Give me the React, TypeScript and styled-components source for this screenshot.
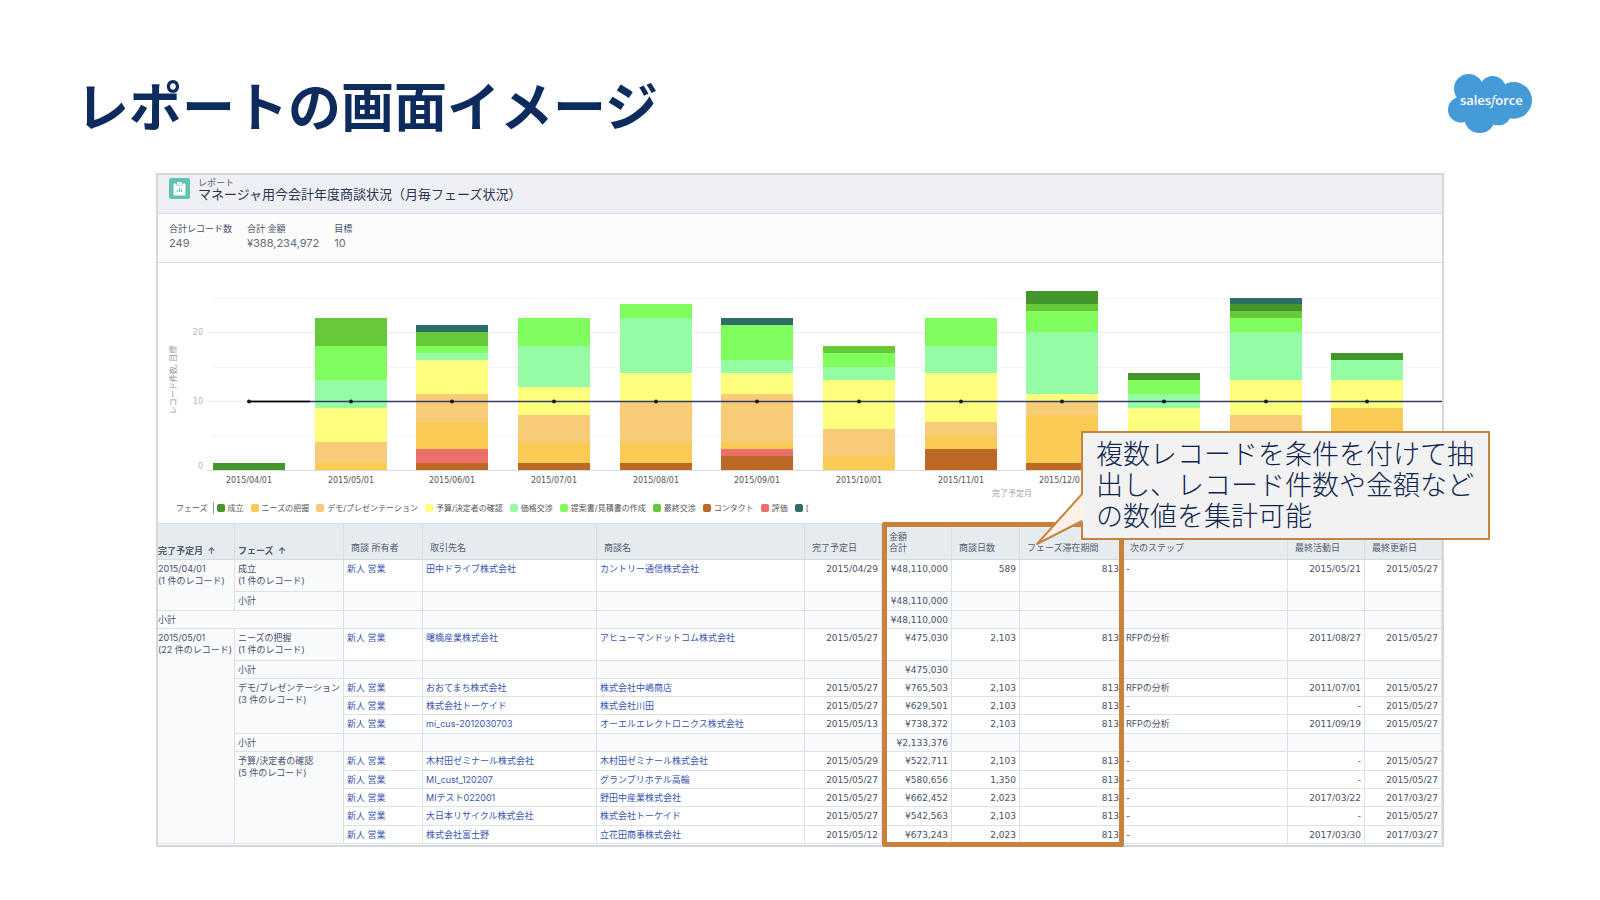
import React from "react";
import styled, { createGlobalStyle } from "styled-components";

const GlobalStyle = createGlobalStyle`
  body {
    margin: 0;
    background: #fff;
    font-family: Inter, "Noto Sans CJK JP", sans-serif;
    color: #4a5068;
  }
  * { box-sizing: border-box; }
`;

const Slide = styled.main`
  padding: 64px 0 52px;
`;

const SlideHeader = styled.header`
  display: flex;
  justify-content: space-between;
  align-items: flex-start;
  padding: 0 68px 0 76px;
  height: 109px;
`;

const SlideTitle = styled.h1`
  margin: 0;
  font-family: "Noto Sans CJK JP", sans-serif;
  font-size: 53px;
  line-height: 80px;
  font-weight: 700;
  color: #0d2b5c;
`;

const Logo = styled.svg`
  display: block;
  width: 84px;
  height: 59px;
  margin-top: 10px;
`;

const Report = styled.section`
  position: relative;
  margin: 0 156px;
  border: 2px solid #d5d7dc;
  background: #fff;
`;

const ReportHeader = styled.header`
  display: flex;
  gap: 8px;
  height: 39px;
  padding: 3px 11px;
  background: #eff0f6;
  border-bottom: 1px solid #d9dce8;
`;

const ReportIcon = styled.svg`
  width: 21px;
  height: 21px;
`;

const ReportKind = styled.p`
  margin: 0;
  font-size: 9px;
  line-height: 9px;
  color: #5b6178;
`;

const ReportTitle = styled.h2`
  margin: 0;
  font-size: 13px;
  line-height: 15px;
  font-weight: 400;
  color: #2b3350;
`;

const Summary = styled.dl`
  display: flex;
  gap: 15px;
  height: 49px;
  margin: 0;
  padding: 8px 11px;
  background: #fcfcfd;
  border-bottom: 1px solid #e2e4e9;
`;

const SummaryLabel = styled.dt`
  font-size: 9px;
  line-height: 14px;
`;

const SummaryValue = styled.dd`
  margin: 0;
  font-size: 11px;
  line-height: 14px;
  color: #666c7e;
`;

const ChartSvg = styled.svg`
  display: block;
  width: 100%;
  height: auto;
`;

const TickLabel = styled.text`
  font-family: "DejaVu Sans", sans-serif;
  font-size: 8px;
`;

const Legend = styled.ul`
  display: flex;
  align-items: center;
  gap: 7px;
  margin: 0;
  padding: 0 0 9px 18px;
  list-style: none;
  font-size: 8px;
  line-height: 12px;
  color: #555;
`;

const LegendTitle = styled.li`
  padding-right: 5px;
  border-right: 1px solid #999;
  margin-right: -4px;
`;

const LegendItem = styled.li`
  display: flex;
  align-items: center;
  gap: 3px;
`;

const Swatch = styled.span<{ $color: string }>`
  width: 8px;
  height: 8px;
  border-radius: 2px;
  background: ${(p) => p.$color};
`;

const TableArea = styled.div`
  position: relative;
  border-top: 1px solid #d3d9e2;
  padding-bottom: 1px;
`;

const Table = styled.table`
  width: 100%;
  table-layout: fixed;
  border-collapse: separate;
  border-spacing: 0;
  font-size: 9px;
  line-height: 12px;
`;

const HeadCell = styled.th<{ $group?: boolean; $first?: boolean }>`
  height: 36px;
  padding: 0 0 ${(p) => (p.$group ? 3 : 6)}px ${(p) => (p.$first ? 0 : p.$group ? 3 : 7)}px;
  border-right: 1px solid #d9dfe5;
  border-bottom: 1px solid #d3d9df;
  background: #e6ebef;
  text-align: left;
  vertical-align: bottom;
  line-height: 11px;
  font-weight: ${(p) => (p.$group ? 600 : 400)};
  white-space: nowrap;
  color: #555c70;
`;

const Row = styled.tr<{ $height: number; $shade?: boolean }>`
  height: ${(p) => p.$height}px;
  background: ${(p) => (p.$shade ? "#f9fafc" : "#fff")};
`;

const Cell = styled.td<{ $first?: boolean; $shade?: boolean }>`
  padding: 3px 0 0 ${(p) => (p.$first ? 0 : 3)}px;
  border-right: 1px solid #dde1e8;
  border-bottom: 1px solid #dde1e8;
  background: ${(p) => (p.$shade ? "#f9fafc" : "transparent")};
  vertical-align: top;
  white-space: nowrap;
`;

const NumberCell = styled(Cell)`
  padding: 3px 3px 0 0;
  font-family: "DejaVu Sans", sans-serif;
  text-align: right;
`;

const RecordLink = styled.a`
  color: #3a55b0;
  text-decoration: none;
`;

const Highlight = styled.div`
  position: absolute;
  top: -2px;
  bottom: -2px;
  left: calc(100% * 724 / 1284);
  width: calc(100% * 242 / 1284);
  border: 5px solid #c8823c;
  border-radius: 2px;
  pointer-events: none;
`;

const Callout = styled.aside`
  position: absolute;
  top: 256px;
  right: -48px;
  width: 409px;
  height: 109px;
  padding: 4px 10px 0 13px;
  border: 2px solid #c8843f;
  background: #f2f2f2;
  font-family: "Noto Sans CJK JP", sans-serif;
  font-size: 27px;
  line-height: 31px;
  font-weight: 300;
  color: #0f2550;
`;

const CalloutTail = styled.svg`
  position: absolute;
  left: -48px;
  top: 58px;
  width: 49px;
  height: 56px;
`;

const C = {
  won: "#43962a",
  needs: "#f9cb55",
  demo: "#f7cb78",
  budget: "#fefe7e",
  price: "#94fca4",
  proposal: "#80fd5c",
  final: "#67c93a",
  contact: "#bd6825",
  review: "#eb706a",
  other: "#2d6f66",
};
type Phase = keyof typeof C;

const bars: { label?: string; stack: [Phase, number][] }[] = [
  { label: "2015/04/01", stack: [["won", 1]] },
  { label: "2015/05/01", stack: [["needs", 1], ["demo", 3], ["budget", 5], ["price", 4], ["proposal", 5], ["final", 4]] },
  { label: "2015/06/01", stack: [["contact", 1], ["review", 2], ["needs", 4], ["demo", 4], ["budget", 5], ["price", 1], ["proposal", 1], ["final", 2], ["other", 1]] },
  { label: "2015/07/01", stack: [["contact", 1], ["needs", 3], ["demo", 4], ["budget", 4], ["price", 6], ["proposal", 4]] },
  { label: "2015/08/01", stack: [["contact", 1], ["needs", 3], ["demo", 6], ["budget", 4], ["price", 8], ["proposal", 2]] },
  { label: "2015/09/01", stack: [["contact", 2], ["review", 1], ["needs", 1], ["demo", 7], ["budget", 3], ["price", 2], ["proposal", 5], ["other", 1]] },
  { label: "2015/10/01", stack: [["needs", 2], ["demo", 4], ["budget", 7], ["price", 2], ["proposal", 2], ["final", 1]] },
  { label: "2015/11/01", stack: [["contact", 3], ["needs", 2], ["demo", 2], ["budget", 7], ["price", 4], ["proposal", 4]] },
  { label: "2015/12/01", stack: [["contact", 1], ["needs", 7], ["demo", 2], ["budget", 1], ["price", 9], ["proposal", 3], ["final", 1], ["won", 2]] },
  { stack: [["needs", 2], ["demo", 2], ["budget", 5], ["price", 2], ["proposal", 2], ["won", 1]] },
  { stack: [["needs", 4], ["demo", 4], ["budget", 5], ["price", 7], ["proposal", 2], ["final", 1], ["won", 1], ["other", 1]] },
  { stack: [["needs", 9], ["budget", 4], ["price", 3], ["won", 1]] },
];

const BASE = 207;
const yOf = (n: number) => Math.round(BASE - n * 6.9);
const centre = (i: number) => Math.round(91 + (i * 305) / 3);

function Chart() {
  return (
    <ChartSvg viewBox="0 0 1284 239" role="img" aria-label="レコード件数, 目標">
      {[0, 5, 10, 15, 20, 25].map((n) => (
        <rect key={n} x={n % 10 ? 55 : 49} y={yOf(n)} width="1235" height="1" fill={n === 0 ? "#dcdcdc" : n % 10 ? "#f4f4f4" : "#ebebeb"} />
      ))}
      {[0, 10, 20].map((n) => (
        <TickLabel key={n} x="45" y={n === 0 ? BASE - 1 : yOf(n) + 3} textAnchor="end" fill="#b8b8b8">{n}</TickLabel>
      ))}
      <text transform="translate(18 117) rotate(-90)" fontSize="8" textAnchor="middle" fill="#999">レコード件数, 目標</text>
      {bars.map((bar, i) => {
        let sum = 0;
        return (
          <g key={i}>
            {bar.stack.map(([phase, n]) => {
              const bottom = yOf(sum);
              sum += n;
              return <rect key={phase} x={centre(i) - 36} y={yOf(sum)} width="72" height={bottom - yOf(sum)} fill={C[phase]} />;
            })}
            {bar.label && <TickLabel x={centre(i)} y="220" textAnchor="middle" fill="#555">{bar.label}</TickLabel>}
          </g>
        );
      })}
      <path d="M91 138.500H1284" stroke="#343a62" strokeWidth="1.300" />
      <path d="M91 138.500H152" stroke="#000" strokeWidth="1.300" />
      {bars.map((_, i) => (
        <circle key={i} cx={centre(i)} cy="138.500" r="2" fill="#151a22" />
      ))}
      <text x="854" y="233" fontSize="8" textAnchor="middle" fill="#a2a2a2">完了予定月</text>
    </ChartSvg>
  );
}

const legend: [string, Phase][] = [
  ["成立", "won"],
  ["ニーズの把握", "needs"],
  ["デモ/プレゼンテーション", "demo"],
  ["予算/決定者の確認", "budget"],
  ["価格交渉", "price"],
  ["提案書/見積書の作成", "proposal"],
  ["最終交渉", "final"],
  ["コンタクト", "contact"],
  ["評価", "review"],
  ["[", "other"],
];

const columns = [77, 109, 79, 174, 208, 77, 70, 68, 103, 165, 77, 77];

type Group = { lines: string[]; span: number };
type RowData = {
  height: number;
  month?: Group;
  phase?: Group;
  subtotal?: "phase" | "month";
  record?: string[];
  amount: string;
};

const rows: RowData[] = [
  { height: 32, month: { lines: ["2015/04/01", "(1 件のレコード)"], span: 2 }, phase: { lines: ["成立", "(1 件のレコード)"], span: 1 }, amount: "¥48,110,000", record: ["田中ドライブ株式会社", "カントリー通信株式会社", "2015/04/29", "589", "-", "2015/05/21", "2015/05/27"] },
  { height: 19, subtotal: "phase", amount: "¥48,110,000" },
  { height: 18, subtotal: "month", amount: "¥48,110,000" },
  { height: 32, month: { lines: ["2015/05/01", "(22 件のレコード)"], span: 11 }, phase: { lines: ["ニーズの把握", "(1 件のレコード)"], span: 1 }, amount: "¥475,030", record: ["曙橋産業株式会社", "アヒューマンドットコム株式会社", "2015/05/27", "2,103", "RFPの分析", "2011/08/27", "2015/05/27"] },
  { height: 18, subtotal: "phase", amount: "¥475,030" },
  { height: 18, phase: { lines: ["デモ/プレゼンテーション", "(3 件のレコード)"], span: 3 }, amount: "¥765,503", record: ["おおてまち株式会社", "株式会社中嶋商店", "2015/05/27", "2,103", "RFPの分析", "2011/07/01", "2015/05/27"] },
  { height: 18, amount: "¥629,501", record: ["株式会社トーケイド", "株式会社川田", "2015/05/27", "2,103", "-", "-", "2015/05/27"] },
  { height: 19, amount: "¥738,372", record: ["mi_cus-2012030703", "オーエルエレクトロニクス株式会社", "2015/05/13", "2,103", "RFPの分析", "2011/09/19", "2015/05/27"] },
  { height: 18, subtotal: "phase", amount: "¥2,133,376" },
  { height: 19, phase: { lines: ["予算/決定者の確認", "(5 件のレコード)"], span: 5 }, amount: "¥522,711", record: ["木村田ゼミナール株式会社", "木村田ゼミナール株式会社", "2015/05/29", "2,103", "-", "-", "2015/05/27"] },
  { height: 18, amount: "¥580,656", record: ["MI_cust_120207", "グランプリホテル高輪", "2015/05/27", "1,350", "-", "-", "2015/05/27"] },
  { height: 18, amount: "¥662,452", record: ["MIテスト022001", "野田中産業株式会社", "2015/05/27", "2,023", "-", "2017/03/22", "2017/03/27"] },
  { height: 19, amount: "¥542,563", record: ["大日本リサイクル株式会社", "株式会社トーケイド", "2015/05/27", "2,103", "-", "-", "2015/05/27"] },
  { height: 18, amount: "¥673,243", record: ["株式会社富士野", "立花田商事株式会社", "2015/05/12", "2,023", "-", "2017/03/30", "2017/03/27"] },
];

function GroupCell({ group, first }: { group: Group; first?: boolean }) {
  return (
    <Cell rowSpan={group.span} $first={first} $shade>
      {group.lines[0]}
      <br />
      {group.lines[1]}
    </Cell>
  );
}

function ReportRow({ row }: { row: RowData }) {
  const r = row.record;
  return (
    <Row $height={row.height} $shade={!r}>
      {row.month && <GroupCell group={row.month} first />}
      {row.phase && <GroupCell group={row.phase} />}
      {row.subtotal === "phase" && <Cell>小計</Cell>}
      {row.subtotal === "month" && <Cell colSpan={2} $first>小計</Cell>}
      <Cell>{r && <RecordLink href="#owner">新人 営業</RecordLink>}</Cell>
      <Cell>{r && <RecordLink href="#account">{r[0]}</RecordLink>}</Cell>
      <Cell>{r && <RecordLink href="#opportunity">{r[1]}</RecordLink>}</Cell>
      <NumberCell>{r?.[2]}</NumberCell>
      <NumberCell>{row.amount}</NumberCell>
      <NumberCell>{r?.[3]}</NumberCell>
      <NumberCell>{r && "813"}</NumberCell>
      <Cell>{r?.[4]}</Cell>
      <NumberCell>{r?.[5]}</NumberCell>
      <NumberCell>{r?.[6]}</NumberCell>
    </Row>
  );
}

export default function App() {
  return (
    <Slide>
      <GlobalStyle />
      <SlideHeader>
        <SlideTitle>レポートの画面イメージ</SlideTitle>
        <Logo viewBox="0 0 252 177" role="img" aria-label="salesforce">
          <g fill="#459bd8">
            <circle cx="62" cy="44" r="44" />
            <circle cx="134" cy="46" r="40" />
            <circle cx="197" cy="79" r="55" />
            <circle cx="39" cy="107" r="39" />
            <circle cx="95" cy="130" r="47" />
            <circle cx="151" cy="114" r="40" />
            <rect x="50" y="50" width="130" height="80" />
          </g>
          <text x="130" y="94" textAnchor="middle" fontFamily="Open Sans, sans-serif" fontWeight="600" fontSize="39" fill="#fff">
            sales<tspan fontStyle="italic" fontWeight="400">f</tspan>orce
          </text>
        </Logo>
      </SlideHeader>
      <Report>
        <ReportHeader>
          <ReportIcon viewBox="0 0 21 21" aria-hidden="true">
            <rect width="21" height="21" rx="2" fill="#5fc2b3" />
            <path d="M5 6h2v2h7V6h2v11H5z" fill="#fff" stroke="#fff" strokeLinejoin="round" />
            <rect x="8" y="4" width="5" height="3" rx="1" fill="#fff" />
            <path d="M8.500 12v2M10.500 10v4M12.500 11v3" stroke="#5fc2b3" />
          </ReportIcon>
          <div>
            <ReportKind>レポート</ReportKind>
            <ReportTitle>マネージャ用今会計年度商談状況（月毎フェーズ状況）</ReportTitle>
          </div>
        </ReportHeader>
        <Summary>
          <div>
            <SummaryLabel>合計レコード数</SummaryLabel>
            <SummaryValue>249</SummaryValue>
          </div>
          <div>
            <SummaryLabel>合計 金額</SummaryLabel>
            <SummaryValue>¥388,234,972</SummaryValue>
          </div>
          <div>
            <SummaryLabel>目標</SummaryLabel>
            <SummaryValue>10</SummaryValue>
          </div>
        </Summary>
        <Chart />
        <Legend>
          <LegendTitle>フェーズ</LegendTitle>
          {legend.map(([name, phase]) => (
            <LegendItem key={phase}>
              <Swatch $color={C[phase]} />
              {name}
            </LegendItem>
          ))}
        </Legend>
        <TableArea>
          <Table>
            <colgroup>
              {columns.map((w, i) => (
                <col key={i} width={w} />
              ))}
            </colgroup>
            <thead>
              <tr>
                <HeadCell $group $first>完了予定月 &nbsp;↑</HeadCell>
                <HeadCell $group>フェーズ &nbsp;↑</HeadCell>
                <HeadCell>商談 所有者</HeadCell>
                <HeadCell>取引先名</HeadCell>
                <HeadCell>商談名</HeadCell>
                <HeadCell>完了予定日</HeadCell>
                <HeadCell>金額<br />合計</HeadCell>
                <HeadCell>商談日数</HeadCell>
                <HeadCell>フェーズ滞在期間</HeadCell>
                <HeadCell>次のステップ</HeadCell>
                <HeadCell>最終活動日</HeadCell>
                <HeadCell>最終更新日</HeadCell>
              </tr>
            </thead>
            <tbody>
              {rows.map((row, i) => (
                <ReportRow key={i} row={row} />
              ))}
            </tbody>
          </Table>
          <Highlight />
        </TableArea>
        <Callout>
          <CalloutTail viewBox="0 0 49 56" aria-hidden="true">
            <path d="M49 2L2 53L49 30Z" fill="#fbf1e6" />
            <path d="M47 3L2 53L47 30" fill="none" stroke="#c8843f" strokeWidth="2" strokeLinejoin="round" />
          </CalloutTail>
          複数レコードを条件を付けて抽出し、レコード件数や金額などの数値を集計可能
        </Callout>
      </Report>
    </Slide>
  );
}
